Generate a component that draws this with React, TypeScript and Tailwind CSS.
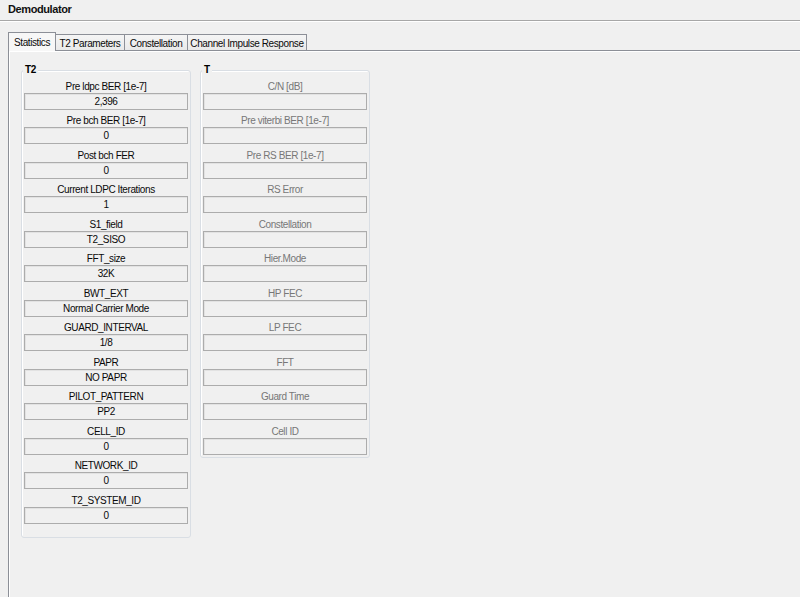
type Field = { label: string; value: string };

const t2Fields: Field[] = [
  { label: "Pre ldpc BER [1e-7]", value: "2,396" },
  { label: "Pre bch BER [1e-7]", value: "0" },
  { label: "Post bch FER", value: "0" },
  { label: "Current LDPC Iterations", value: "1" },
  { label: "S1_field", value: "T2_SISO" },
  { label: "FFT_size", value: "32K" },
  { label: "BWT_EXT", value: "Normal Carrier Mode" },
  { label: "GUARD_INTERVAL", value: "1/8" },
  { label: "PAPR", value: "NO PAPR" },
  { label: "PILOT_PATTERN", value: "PP2" },
  { label: "CELL_ID", value: "0" },
  { label: "NETWORK_ID", value: "0" },
  { label: "T2_SYSTEM_ID", value: "0" },
];

const tFields: Field[] = [
  { label: "C/N [dB]", value: "" },
  { label: "Pre viterbi BER [1e-7]", value: "" },
  { label: "Pre RS BER [1e-7]", value: "" },
  { label: "RS Error", value: "" },
  { label: "Constellation", value: "" },
  { label: "Hier.Mode", value: "" },
  { label: "HP FEC", value: "" },
  { label: "LP FEC", value: "" },
  { label: "FFT", value: "" },
  { label: "Guard Time", value: "" },
  { label: "Cell ID", value: "" },
];

const tabs = [
  { name: "Statistics", w: "w-[48px]" },
  { name: "T2 Parameters", w: "w-[69px]" },
  { name: "Constellation", w: "w-[63px]" },
  { name: "Channel Impulse Response", w: "w-[119px]" },
];

function Group({
  title,
  fields,
  disabled,
  pb,
}: {
  title: string;
  fields: Field[];
  disabled?: boolean;
  pb: string;
}) {
  return (
    <div
      className={`relative w-[170px] rounded-[3px] border border-[#d9dee4] shadow-[inset_1px_1px_0_#ffffff] px-[1px] pt-[8px] ${pb}`}
    >
      <span className="absolute -top-[8px] left-[1px] bg-[#f0f0f0] px-[2px] text-[10px] font-bold leading-[14px] text-black">
        {title}
      </span>
      <div className="flex flex-col gap-[3.47px]">
        {fields.map((f) => (
          <div key={f.label} className="flex flex-col">
            <div
              className={`h-[14px] pt-[1px] text-center leading-[14px] ${
                disabled ? "text-[#777777]" : "text-[#0a0a0a]"
              }`}
            >
              {f.label}
            </div>
            <div className="mx-[1px] flex h-[17px] items-center justify-center border border-[#acacac] shadow-[inset_1px_1px_0_#e2e2e2] text-[#0a0a0a]">
              {f.value}
            </div>
          </div>
        ))}
      </div>
    </div>
  );
}

export default function App() {
  return (
    <div className="h-[597px] w-[800px] overflow-hidden bg-[#f0f0f0] font-['Liberation_Sans',Arial,sans-serif] text-[10px] tracking-[-0.4px]">
      {/* Title */}
      <div className="h-[20px] px-[8px] pt-[2px] text-[11px] font-bold leading-[14px] text-[#111]">
        Demodulator
      </div>
      <div className="h-[2px] border-t border-[#a7a7a7] border-b border-b-white" />

      {/* Tabs */}
      <div className="mt-[10px] flex h-[18px] items-end pl-[8px]">
        {tabs.map((t, i) => (
          <div
            key={t.name}
            className={`${t.w} flex items-center justify-center whitespace-nowrap border-t border-r border-[#8c8f97] text-[#0a0a0a] ${
              i === 0
                ? "relative z-10 -mb-px h-[19px] border-l bg-[#f7f7f7]"
                : "h-[16px] pt-[1px] bg-gradient-to-b from-[#f5f5f5] to-[#e9e9e9]"
            }`}
          >
            {t.name}
          </div>
        ))}
      </div>

      {/* Panel */}
      <div className="ml-[8px] flex h-[560px] items-start gap-[9px] border-t border-l border-[#8c8f97] pl-[12px] pt-[19px] shadow-[inset_1px_1px_0_#ffffff]">
        <Group title="T2" fields={t2Fields} pb="pb-[13px]" />
        <Group title="T" fields={tFields} disabled pb="pb-[2px]" />
      </div>
    </div>
  );
}
